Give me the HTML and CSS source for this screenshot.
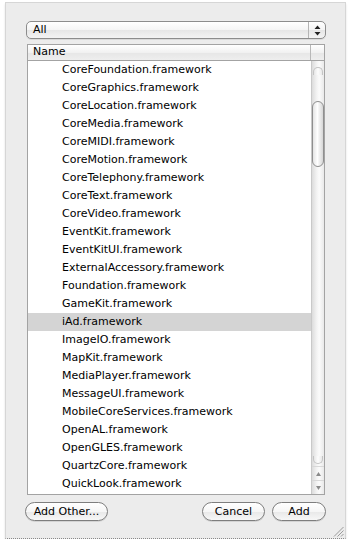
FILE: index.html
```html
<!DOCTYPE html>
<html lang="en">
<head>
    <meta name="viewport" content="width=device-width, initial-scale=1.0">
    <title>Add Frameworks</title>
    <link rel="stylesheet" href="styles.css">
</head>
<body>
    <div class="panel">
        <div class="popup">
            <span class="popup-label">All</span>
            <span class="popup-arrows">
                <svg width="7" height="11" viewBox="0 0 7 11"><path d="M3.5 0.5 L6.5 4 L0.5 4 Z M3.5 10.5 L6.5 7 L0.5 7 Z" fill="#222"/></svg>
            </span>
        </div>

        <div class="table">
            <div class="table-head">
                <div class="head-cell">Name</div>
                <div class="head-corner"></div>
            </div>
            <div class="table-body">
                <ul class="rows">
                    <li>CoreFoundation.framework</li>
                    <li>CoreGraphics.framework</li>
                    <li>CoreLocation.framework</li>
                    <li>CoreMedia.framework</li>
                    <li>CoreMIDI.framework</li>
                    <li>CoreMotion.framework</li>
                    <li>CoreTelephony.framework</li>
                    <li>CoreText.framework</li>
                    <li>CoreVideo.framework</li>
                    <li>EventKit.framework</li>
                    <li>EventKitUI.framework</li>
                    <li>ExternalAccessory.framework</li>
                    <li>Foundation.framework</li>
                    <li>GameKit.framework</li>
                    <li class="selected">iAd.framework</li>
                    <li>ImageIO.framework</li>
                    <li>MapKit.framework</li>
                    <li>MediaPlayer.framework</li>
                    <li>MessageUI.framework</li>
                    <li>MobileCoreServices.framework</li>
                    <li>OpenAL.framework</li>
                    <li>OpenGLES.framework</li>
                    <li>QuartzCore.framework</li>
                    <li>QuickLook.framework</li>
                </ul>
                <div class="scrollbar">
                    <div class="track">
                        <div class="cap cap-top"></div>
                        <div class="thumb"></div>
                        <div class="cap cap-bottom"></div>
                    </div>
                    <div class="arrow">
                        <svg width="5" height="4" viewBox="0 0 5 4"><path d="M2.5 0 L5 4 L0 4 Z" fill="#8a8a8a"/></svg>
                    </div>
                    <div class="arrow">
                        <svg width="5" height="4" viewBox="0 0 5 4"><path d="M0 0 L5 0 L2.5 4 Z" fill="#8a8a8a"/></svg>
                    </div>
                </div>
            </div>
        </div>

        <div class="buttons">
            <button class="btn btn-other">Add Other...</button>
            <span class="spacer"></span>
            <button class="btn btn-cancel">Cancel</button>
            <button class="btn btn-add">Add</button>
        </div>

        <div class="grip">
            <svg width="11" height="11" viewBox="0 0 11 11">
                <path d="M10.5 1 L1 10.5 M10.5 4.5 L4.5 10.5 M10.5 8 L8 10.5" stroke="#9a9a9a" stroke-width="1"/>
            </svg>
        </div>
    </div>
</body>
</html>
```

FILE: styles.css
```css
* {
    box-sizing: border-box;
}
body {
    margin: 0;
    background: #fff;
    font-family: "DejaVu Sans", "Lucida Grande", sans-serif;
    font-size: 11px;
    color: #000;
}
.panel {
    position: relative;
    width: 341px;
    height: 537px;
    margin: 2px 0 0 5px;
    padding: 18px 20px 0 20px;
    background: #ececec;
    border: 1px solid #d6d6d6;
    border-bottom: 1px dotted #8a8a8a;
    box-shadow: 0 2px 2px rgba(0, 0, 0, 0.12);
}
.popup {
    display: flex;
    align-items: center;
    width: 300px;
    height: 18px;
    border: 1px solid #8c8c8c;
    border-radius: 5px;
    background: linear-gradient(#ffffff, #f4f4f4 50%, #e6e6e6 51%, #f3f3f3);
    box-shadow: 0 1px 0 rgba(0, 0, 0, 0.08);
}
.popup-label {
    flex: 1;
    padding-left: 6px;
    line-height: 16px;
}
.popup-arrows {
    display: flex;
    align-items: center;
    justify-content: center;
    width: 17px;
    height: 16px;
    border-left: 1px solid #b4b4b4;
}
.table {
    width: 298px;
    height: 451px;
    margin: 5px 0 0 1px;
    border: 1px solid #a3a3a3;
    background: #fff;
    display: flex;
    flex-direction: column;
}
.table-head {
    display: flex;
    height: 16px;
    border-bottom: 1px solid #a3a3a3;
    background: linear-gradient(#ffffff, #f1f1f1 50%, #e6e6e6 51%, #eeeeee);
}
.head-cell {
    flex: 1;
    padding-left: 5px;
    line-height: 14px;
    border-right: 1px solid #b8b8b8;
}
.head-corner {
    width: 13px;
}
.table-body {
    flex: 1;
    display: flex;
    overflow: hidden;
}
.rows {
    flex: 1;
    list-style: none;
    margin: 0;
    padding: 0;
}
.rows li {
    height: 18px;
    line-height: 17px;
    padding-left: 34px;
    white-space: nowrap;
}
.rows li.selected {
    background: #d4d4d4;
}
.scrollbar {
    width: 13px;
    display: flex;
    flex-direction: column;
    border-left: 1px solid #c9c9c9;
    background: linear-gradient(90deg, #dcdcdc, #f3f3f3 40%, #fbfbfb 60%, #e9e9e9);
}
.track {
    flex: 1;
    display: flex;
    flex-direction: column;
    padding-top: 6px;
}
.cap {
    height: 8px;
    margin: 0 1px;
    border: 1px solid #c4c4c4;
    background: linear-gradient(90deg, #e6e6e6, #fdfdfd 50%, #e9e9e9);
}
.cap-top {
    border-bottom: none;
    border-radius: 6px 6px 0 0;
}
.cap-bottom {
    margin-top: auto;
    margin-bottom: 2px;
    border-top: none;
    border-radius: 0 0 6px 6px;
}
.thumb {
    height: 66px;
    margin: 26px 0 0 0;
    border: 1px solid #8f8f8f;
    border-radius: 6px;
    background: linear-gradient(90deg, #e4e4e4, #ffffff 45%, #f2f2f2 60%, #d6d6d6);
}
.arrow {
    height: 14px;
    display: flex;
    align-items: center;
    justify-content: center;
    border-top: 1px solid #d8d8d8;
}
.buttons {
    display: flex;
    align-items: center;
    gap: 7px;
    margin-top: 7px;
    width: 301px;
    margin-left: -1px;
}
.spacer {
    flex: 1;
}
.btn {
    height: 19px;
    padding: 0 2px;
    font-family: inherit;
    font-size: 11px;
    line-height: 16px;
    white-space: nowrap;
    color: #000;
    border: 1px solid #7e7e7e;
    border-radius: 10px;
    background: linear-gradient(#ffffff, #f6f6f6 50%, #e8e8e8 51%, #f7f7f7);
    box-shadow: 0 1px 0 rgba(0, 0, 0, 0.1);
}
.btn-other {
    width: 83px;
}
.btn-cancel {
    width: 63px;
}
.btn-add {
    width: 54px;
}
.grip {
    position: absolute;
    right: 1px;
    bottom: 1px;
    line-height: 0;
}
```
